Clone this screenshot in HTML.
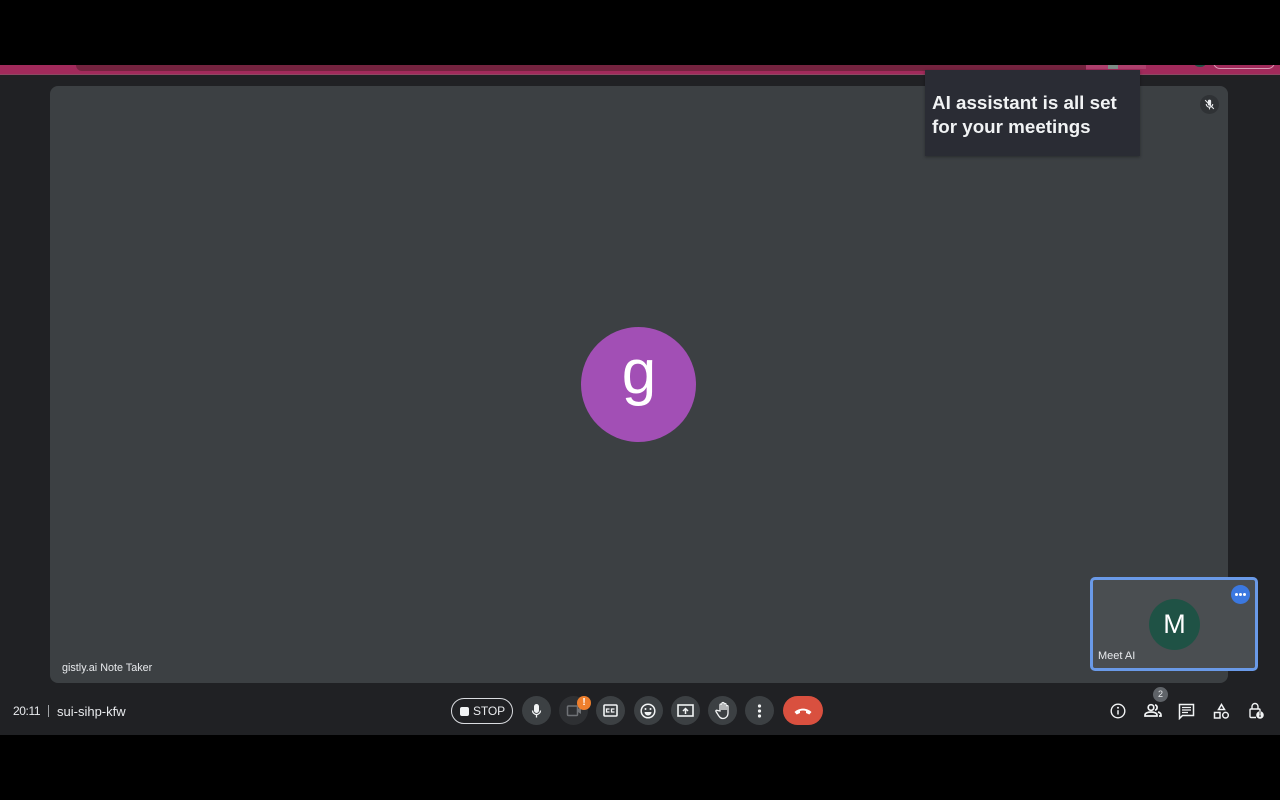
<!DOCTYPE html>
<html>
<head>
<meta charset="utf-8">
<style>
html,body{margin:0;padding:0;background:#000;width:1280px;height:800px;overflow:hidden;font-family:"Liberation Sans",sans-serif}
.a{position:absolute}
.t{position:absolute;white-space:nowrap}
.btn{position:absolute;top:696px;width:29px;height:29px;border-radius:50%;background:#3c4043}
.btn svg,.ic svg{display:block}
.ic{position:absolute}
</style>
</head>
<body>
<div class="a" style="left:0;top:65px;width:1280px;height:670px;background:#202124"></div>

<div class="a" style="left:0;top:65px;width:1280px;height:10px;background:#a12a5b;overflow:hidden">
  <div class="a" style="left:0;top:9px;width:1280px;height:1px;background:#8e4763"></div>
  <div class="a" style="left:76px;top:0;width:1010px;height:6px;background:#74233f;border-radius:0 0 0 8px"></div>
  <div class="a" style="left:1086px;top:0;width:60px;height:4px;background:#ad3f6c"></div>
  <div class="a" style="left:1108px;top:0;width:10px;height:4px;background:#7d8c86"></div>
  <div class="a" style="left:1194px;top:-6px;width:12px;height:8px;border-radius:50%;background:#1f5245"></div>
  <div class="a" style="left:1213px;top:-10px;width:62px;height:14px;border:1px solid #d99ab4;border-radius:8px;box-sizing:border-box"></div>
</div>

<div class="a" style="left:50px;top:86px;width:1178px;height:597px;background:#3c4043;border-radius:8px"></div>

<div class="a" style="left:925px;top:70px;width:215px;height:86px;background:#2a2c34;box-shadow:0 1px 3px rgba(0,0,0,.35)"></div>
<div class="t" style="left:932px;top:91px;font-size:18.8px;line-height:24px;font-weight:700;color:#f1f3f4">AI assistant is all set<br>for your meetings</div>

<div class="a" style="left:1200px;top:95px;width:19px;height:19px;border-radius:50%;background:#2f3235"></div>
<svg class="a" style="left:1203px;top:98px" width="13" height="13" viewBox="0 0 24 24" fill="none"><rect x="9" y="3" width="6" height="11" rx="3" fill="#e8eaed"/><path d="M6 11a6 6 0 0 0 12 0M12 17v4" stroke="#e8eaed" stroke-width="2"/><path d="M4 4l16 16" stroke="#e8eaed" stroke-width="2"/></svg>

<div class="a" style="left:581px;top:327px;width:115px;height:115px;border-radius:50%;background:#a24fb5"></div>
<div class="t" style="left:581px;top:327px;width:116px;text-align:center;font-size:62px;line-height:91px;color:#fff">g</div>

<div class="t" style="left:62px;top:661px;font-size:10.8px;line-height:14px;color:#e8eaed">gistly.ai Note Taker</div>

<div class="a" style="left:1090px;top:577px;width:168px;height:94px;box-sizing:border-box;border:3px solid #6a9ae8;border-radius:5px;background:#4a4e51"></div>
<div class="a" style="left:1149px;top:599px;width:51px;height:51px;border-radius:50%;background:#1f5245"></div>
<div class="t" style="left:1149px;top:599px;width:51px;text-align:center;font-size:27px;line-height:50px;color:#fff">M</div>
<div class="t" style="left:1098px;top:650px;font-size:11px;line-height:13px;color:#e8eaed">Meet AI</div>
<div class="a" style="left:1231px;top:585px;width:19px;height:19px;border-radius:50%;background:#3b78e0"></div>
<svg class="a" style="left:1231px;top:585px" width="19" height="19"><circle cx="5.5" cy="9.5" r="1.5" fill="#fff"/><circle cx="9.5" cy="9.5" r="1.5" fill="#fff"/><circle cx="13.5" cy="9.5" r="1.5" fill="#fff"/></svg>

<div class="t" style="left:13px;top:704px;font-size:12px;line-height:15px;letter-spacing:-.4px;color:#e8eaed">20:11</div>
<div class="a" style="left:48px;top:705px;width:1px;height:12px;background:#a0a3a6"></div>
<div class="t" style="left:57px;top:704px;font-size:13px;line-height:15px;color:#e8eaed">sui-sihp-kfw</div>

<div class="a" style="left:451px;top:698px;width:62px;height:26px;box-sizing:border-box;border:1px solid #dadce0;border-radius:13px"></div>
<div class="a" style="left:460px;top:707px;width:9px;height:9px;border-radius:2px;background:#f1f3f4"></div>
<div class="t" style="left:473px;top:704px;font-size:12px;line-height:15px;letter-spacing:-.1px;color:#e8eaed">STOP</div>

<div class="btn" style="left:522px"><svg width="29" height="29" viewBox="0 0 29 29" fill="none"><rect x="12" y="8" width="5" height="9" rx="2.5" fill="#f1f3f4"/><path d="M10.5 14.500a4 4 0 0 0 8 0M14.500 18.500v3" stroke="#f1f3f4" stroke-width="1.300"/></svg></div>

<div class="btn" style="left:559px;background:#2e3033"><svg width="29" height="29" viewBox="0 0 29 29" fill="none"><rect x="8.500" y="10" width="10" height="9.500" rx="1" stroke="#6f7276" stroke-width="1.500"/><path d="M19 13l3-2v7l-3-2z" fill="#6f7276"/></svg></div>
<div class="a" style="left:577px;top:696px;width:14px;height:14px;border-radius:50%;background:#ee7f2d"></div>
<div class="t" style="left:577px;top:696px;width:14px;text-align:center;font-size:10px;line-height:14px;font-weight:700;color:#fff">!</div>

<div class="btn" style="left:596px"><svg width="29" height="29" viewBox="0 0 29 29" fill="none"><rect x="8" y="9" width="13" height="11" rx="1" stroke="#f1f3f4" stroke-width="1.600"/><path d="M13.500 13h-3v3h3M18.500 13h-3v3h3" stroke="#f1f3f4" stroke-width="1.300"/></svg></div>

<div class="btn" style="left:634px"><svg width="29" height="29" viewBox="0 0 29 29" fill="none"><circle cx="14" cy="15" r="6.800" stroke="#f1f3f4" stroke-width="1.500"/><circle cx="11.500" cy="13" r="1" fill="#f1f3f4"/><circle cx="16.500" cy="13" r="1" fill="#f1f3f4"/><path d="M10.500 16h7a3.500 3.500 0 0 1-7 0z" fill="#f1f3f4"/></svg></div>

<div class="btn" style="left:671px"><svg width="29" height="29" viewBox="0 0 29 29" fill="none"><rect x="7" y="9" width="15" height="11" stroke="#f1f3f4" stroke-width="1.600"/><path d="M14.500 18v-5M12 15l2.500-2.500L17 15" stroke="#f1f3f4" stroke-width="1.500"/></svg></div>

<div class="btn" style="left:708px"><svg width="29" height="29" viewBox="0 0 29 29" fill="none"><path d="M12 15V9a1 1 0 0 1 2 0v5V7.500a1 1 0 0 1 2 0V14V8.500a1 1 0 0 1 2 0V14v-3.500a1 1 0 0 1 2 0V17c0 3-2 5.500-5 5.500-2.500 0-3.500-1.500-4.500-3l-2.500-4c-.5-1 .8-1.800 1.500-1z" stroke="#f1f3f4" stroke-width="1.300" fill="none"/></svg></div>

<div class="btn" style="left:745px"><svg width="29" height="29"><circle cx="14.500" cy="10" r="1.600" fill="#f1f3f4"/><circle cx="14.500" cy="15" r="1.600" fill="#f1f3f4"/><circle cx="14.500" cy="20" r="1.600" fill="#f1f3f4"/></svg></div>

<div class="a" style="left:783px;top:696px;width:40px;height:29px;border-radius:15px;background:#d9503f"></div>
<svg class="a" style="left:793px;top:701px" width="20" height="20" viewBox="0 0 20 20"><path d="M1.500 11c4.500-4.500 12.500-4.500 17 0l-2.200 2.500-3.300-1.500v-2c-2-.6-4-.6-6 0v2l-3.300 1.500z" fill="#fff"/></svg>

<svg class="ic" style="left:1108px;top:701px" width="20" height="20" viewBox="0 0 20 20" fill="none"><circle cx="10" cy="10" r="6.800" stroke="#f1f3f4" stroke-width="1.400"/><path d="M10 9.200v4.300" stroke="#f1f3f4" stroke-width="1.500"/><circle cx="10" cy="6.800" r="1" fill="#f1f3f4"/></svg>

<div class="a" style="left:1153px;top:687px;width:15px;height:15px;border-radius:50%;background:#5f6368"></div>
<div class="t" style="left:1153px;top:687px;width:15px;text-align:center;font-size:9px;line-height:15px;color:#e8eaed">2</div>
<svg class="ic" style="left:1143px;top:702px" width="20" height="18" viewBox="0 0 20 18" fill="none"><circle cx="8" cy="5.500" r="2.800" stroke="#f1f3f4" stroke-width="1.700"/><path d="M2 14v-1c0-2 3-3 6-3s6 1 6 3v1z" stroke="#f1f3f4" stroke-width="1.700"/><path d="M12 2.800a2.800 2.800 0 0 1 0 5.400M15 10c1.800.5 3 1.400 3 3v1h-2" stroke="#f1f3f4" stroke-width="1.700"/></svg>

<svg class="ic" style="left:1178px;top:703px" width="17" height="17" viewBox="0 0 17 17" fill="none"><path d="M1.500 1.500h14v11h-11l-3 3z" stroke="#f1f3f4" stroke-width="1.500"/><path d="M4 4.500h9M4 7h9M4 9.500h6" stroke="#f1f3f4" stroke-width="1.200"/></svg>

<svg class="ic" style="left:1213px;top:703px" width="17" height="17" viewBox="0 0 17 17" fill="none"><path d="M8.500 1.500l3 5h-6z" stroke="#f1f3f4" stroke-width="1.500"/><rect x="1.500" y="9.500" width="5.500" height="5.500" stroke="#f1f3f4" stroke-width="1.500"/><circle cx="12.500" cy="12.200" r="2.800" stroke="#f1f3f4" stroke-width="1.500"/></svg>

<svg class="ic" style="left:1247px;top:702px" width="18" height="18" viewBox="0 0 18 18" fill="none"><path d="M5 7V4.500a3 3 0 0 1 6 0V7" stroke="#f1f3f4" stroke-width="1.400"/><path d="M9 15.500H4a1 1 0 0 1-1-1V8a1 1 0 0 1 1-1h8a1 1 0 0 1 1 1v1" stroke="#f1f3f4" stroke-width="1.400"/><circle cx="13" cy="13" r="3.800" fill="#f1f3f4"/><path d="M13 12.500V15" stroke="#202124" stroke-width="1.200"/><circle cx="13" cy="11" r=".7" fill="#202124"/></svg>
</body>
</html>
